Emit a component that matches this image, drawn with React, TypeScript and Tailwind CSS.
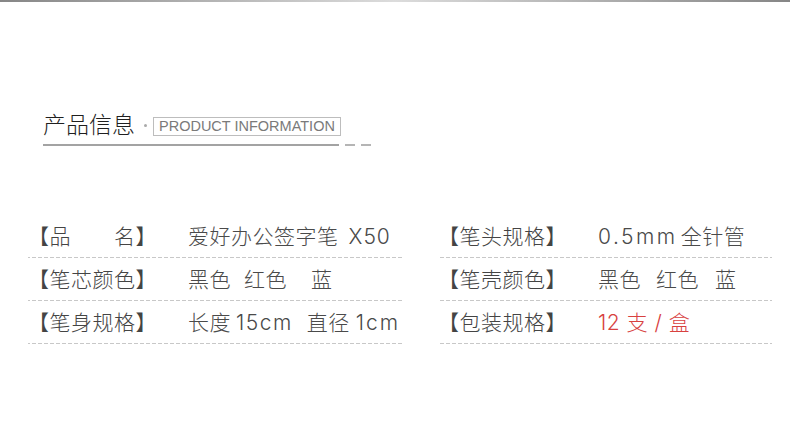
import React from "react";

type Spec = { label: string; value: React.ReactNode };

const left: Spec[] = [
  { label: "【品　　名】", value: <>爱好办公签字笔<span className="ml-[10px] tracking-[1px]">X50</span></> },
  { label: "【笔芯颜色】", value: <>黑色<span className="ml-[13px]">红色</span><span className="ml-[24px]">蓝</span></> },
  { label: "【笔身规格】", value: <>长度<span className="ml-[5px] tracking-[1.5px]">15cm</span><span className="ml-[14px]">直径</span><span className="ml-[6px] tracking-[2px]">1cm</span></> },
];

const right: Spec[] = [
  { label: "【笔头规格】", value: <><span className="tracking-[2.5px]">0.5mm</span><span className="ml-[3px]">全针管</span></> },
  { label: "【笔壳颜色】", value: <>黑色<span className="ml-[15px]">红色</span><span className="ml-[16px]">蓝</span></> },
  { label: "【包装规格】", value: <span className="text-[#d8413f]">12 支 / 盒</span> },
];

function Row({ label, value }: Spec) {
  return (
    <div className="flex items-center h-[43px] bg-[linear-gradient(to_right,#c8c8c8_4px,transparent_4px)] bg-[length:6px_1px] bg-repeat-x bg-bottom">
      <span className="w-[160px] shrink-0 text-[21px] tracking-[0.5px] text-[#444]">{label}</span>
      <span className="text-[21px] tracking-[0.5px] text-[#4a4a4a] whitespace-nowrap">{value}</span>
    </div>
  );
}

export default function App() {
  return (
    <div className="w-[790px] h-[434px] bg-white font-['Inter','Noto_Sans_CJK_SC',sans-serif] font-light overflow-hidden">
      <div className="h-[2px] bg-[linear-gradient(to_right,#868686,#dcdcdc_50%,#868686)]" />

      <div className="pl-[43px] pt-[108px]">
        <div className="flex items-center h-[30px]">
          <span className="text-[23px] text-[#1f1f1f] leading-none">产品信息</span>
          <span className="w-[3px] h-[3px] rounded-full bg-[#aaa] ml-[9px] mr-[6px] mt-[1px]" />
          <span className="h-[19px] mt-[2px] border border-[#bdbdbd] px-[5px] font-['Liberation_Sans',sans-serif] font-normal text-[14.5px] leading-[17px] text-[#7a7a7a]">
            PRODUCT INFORMATION
          </span>
        </div>
        <div className="flex items-center mt-[4px] gap-[6px]">
          <div className="w-[296px] h-[2px] bg-[#a3a3a3]" />
          <div className="w-[10px] h-[2px] bg-[#b5b5b5]" />
          <div className="w-[10px] h-[2px] bg-[#b5b5b5]" />
        </div>
      </div>

      <div className="flex pl-[28px] mt-[69px] gap-[36px]">
        <div className="w-[374px]">
          {left.map((r) => (
            <Row key={r.label} {...r} />
          ))}
        </div>
        <div className="w-[334px]">
          {right.map((r) => (
            <Row key={r.label} {...r} />
          ))}
        </div>
      </div>
    </div>
  );
}
